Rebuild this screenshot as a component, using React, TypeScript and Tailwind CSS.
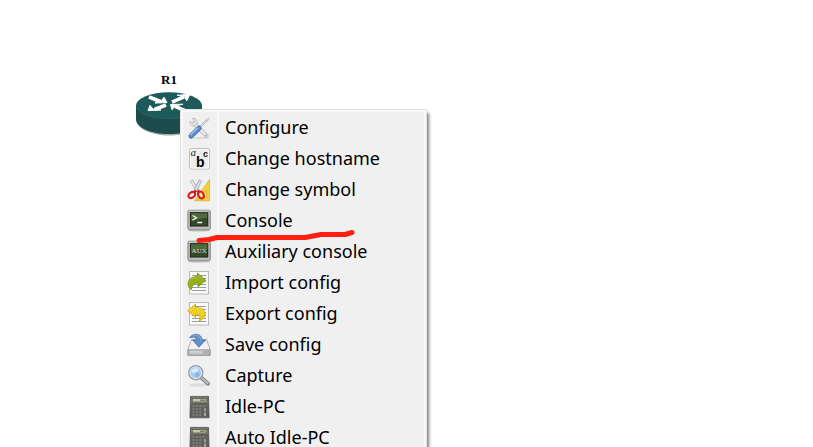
import type { ReactNode } from "react";

function Svg({ children }: { children: ReactNode }) {
    return (
        <svg viewBox="0 0 24 24" className="w-6 h-6 shrink-0" aria-hidden="true">
            {children}
        </svg>
    );
}

function ToolsIcon() {
    return (
        <Svg>
            <ellipse cx="12" cy="22" rx="10" ry="1.2" fill="#dcdcdc" />
            <path d="M7 7.5 19.5 20" stroke="#b4b7b9" strokeWidth="4.2" strokeLinecap="round" />
            <path d="M7 7.5 19.5 20" stroke="#e6e8e9" strokeWidth="2.8" strokeLinecap="round" />
            <path d="M3 5.5 5.8 7 7.5 5 5.5 2.4C8.5 1.8 10.6 4 10 7.5L8 10C5 10.5 2.6 8.5 3 5.5Z" fill="#e2e4e5" stroke="#b0b3b5" strokeWidth=".8" />
            <circle cx="19" cy="19.5" r=".9" fill="#9da1a4" />
            <path d="M12 12 19.5 4.5" stroke="#acb0b3" strokeWidth="2" />
            <path d="M12.3 11.7 19.5 4.5" stroke="#eceeef" strokeWidth="1" />
            <path d="m18.5 4 3-2 .8.8-2 3Z" fill="#d8dbdd" stroke="#a9adaf" strokeWidth=".5" />
            <path d="M4 20 12 12.2" stroke="#3f6fb2" strokeWidth="5" strokeLinecap="round" />
            <path d="M4 19.8 11.7 12.3" stroke="#5b8dcd" strokeWidth="3.4" strokeLinecap="round" />
            <path d="M3.6 18.8 10.5 12.2" stroke="#a9c8ee" strokeWidth="1.2" strokeLinecap="round" />
        </Svg>
    );
}

function HostnameIcon() {
    return (
        <Svg>
            <rect x="2.5" y="1.5" width="20" height="20.5" rx="2" fill="#ededed" stroke="#bdbdbd" />
            <rect x="3.5" y="2.5" width="18" height="18.5" rx="1" fill="none" stroke="#fafafa" />
            <text x="3.4" y="9" fontSize="11" fontStyle="italic" fontFamily="Liberation Serif, serif" fill="#222">a</text>
            <text x="9" y="19.6" fontSize="14" fontWeight="700" fontFamily="Liberation Sans, sans-serif" fill="#000">b</text>
            <text x="16" y="9.6" fontSize="9" fontWeight="700" fontFamily="Liberation Sans, sans-serif" fill="#111">c</text>
        </Svg>
    );
}

function SymbolIcon() {
    return (
        <Svg>
            <path d="M22.5 1.5V22.8H7.5Z" fill="#f4cf3c" stroke="#e0b02a" strokeWidth=".8" />
            <path d="M19.5 12.5v7h-5Z" fill="#f6e8b1" stroke="#d7a321" strokeWidth=".7" />
            <path d="M4.2 2.4 12.6 15" stroke="#a0a3a5" strokeWidth="3.4" />
            <path d="M4.4 2.8 12.4 14.8" stroke="#e3e5e6" strokeWidth="2.2" />
            <path d="M13.6 2 7 15" stroke="#989b9e" strokeWidth="3.4" />
            <path d="M13.6 2.3 7.2 14.8" stroke="#d9dcdd" strokeWidth="2.2" />
            <path d="M10.5 12.5 13 15M9 12.5 6.5 15.3" stroke="#d01818" strokeWidth="2.4" />
            <ellipse cx="4.8" cy="17" rx="3.6" ry="2.6" transform="rotate(-35 4.8 17)" fill="#f0f0f0" stroke="#d61d1d" strokeWidth="2" />
            <ellipse cx="14" cy="17" rx="2.6" ry="3.6" transform="rotate(-28 14 17)" fill="#f6e3a5" stroke="#d61d1d" strokeWidth="2" />
        </Svg>
    );
}

function Monitor({ children }: { children: ReactNode }) {
    return (
        <Svg>
            <ellipse cx="12" cy="21.4" rx="11" ry="1.2" fill="#bcbcbc" />
            <rect x=".8" y="1.2" width="22.6" height="19.5" rx="1.8" fill="#b0b2ac" stroke="#8b8d88" strokeWidth=".9" />
            <path d="M2 2.2h20" stroke="#d2d3cf" strokeWidth=".9" />
            <path d="M2 19h20" stroke="#c3c4c0" strokeWidth="1.2" />
            <rect x="3.5" y="3.7" width="17.2" height="13.3" fill="#34482a" stroke="#1c2617" strokeWidth="1" />
            <path d="M4 4.2h16.2V9C14 9 9 11 4 12Z" fill="#4f6a3d" />
            {children}
        </Svg>
    );
}

function ConsoleIcon() {
    return (
        <Monitor>
            <path d="m5.5 6.5 4 2.3-4 2.3M10.3 13.5h5" fill="none" stroke="#f2f5ee" strokeWidth="1.3" />
        </Monitor>
    );
}

function AuxIcon() {
    return (
        <Monitor>
            <text x="4.6" y="13" fontSize="7" fontFamily="Liberation Serif, serif" fill="#dde5d3">AUX</text>
        </Monitor>
    );
}

function Page() {
    return (
        <>
            <rect x="2.5" y=".5" width="19" height="22.5" fill="#fafafa" stroke="#b9b9b9" />
            <path d="M5 4.5h14M5 7.5h14M5 10.5h14M5 13.5h14M5 16.5h14M5 19.5h14" stroke="#9c9c9c" strokeWidth="1" />
        </>
    );
}

function ImportIcon() {
    return (
        <Svg>
            <Page />
            <path d="M10.5 2 18.7 9.2 11 15.8V12C7 12 5 14.2 4.2 18.8 1 16 .2 12.3 2.3 9 4.1 6.4 7 5.6 10.5 5.6Z" fill="#94b11a" stroke="#718913" strokeWidth=".8" />
            <path d="M11.3 4 16 8.2M2.5 11C4 7.5 7 6.6 11 6.6" fill="none" stroke="#b3ca40" strokeWidth=".8" />
        </Svg>
    );
}

function ExportIcon() {
    return (
        <Svg>
            <Page />
            <path d="M8.5 2 .7 8.8 8.5 15.5V12C12.3 12 14 14.5 12.3 19 17 16.8 19.2 13 17.4 9.4 15.9 6.4 12.8 5.6 8.5 5.6Z" fill="#ecd01c" stroke="#c9a10b" strokeWidth=".8" />
            <path d="M7.8 4 2.4 8.6M8.8 6.6C12.8 6.6 15.5 7.8 16.6 10.5" fill="none" stroke="#f7e76d" strokeWidth=".8" />
        </Svg>
    );
}

function SaveIcon() {
    return (
        <Svg>
            <path d="M4.5 6.5h15l3.7 10v5.8H.8v-5.8Z" fill="#f1f2f1" stroke="#a5a7a5" strokeWidth=".9" />
            <path d="M1 16.8h22v5.4H1Z" fill="#bfc0bf" stroke="#8b8d8b" strokeWidth=".8" />
            <path d="M2.5 18.3h13M2.5 20h13" stroke="#d6d7d6" strokeWidth=".8" />
            <path d="M17 18v3M19 18v3M21 18v3" stroke="#979997" strokeWidth=".8" />
            <path d="M2.6 4.8C5 .2 14.5-.8 15 7h3.6L11.9 14.2 5.5 7h4C9.4 4.2 6.5 3.4 2.6 4.8Z" fill="#6290c8" stroke="#4475ae" strokeWidth=".8" />
            <path d="M6 3C9.5 .8 13.4 2.6 13.9 8" fill="none" stroke="#94b7de" strokeWidth=".8" />
        </Svg>
    );
}

function CaptureIcon() {
    return (
        <Svg>
            <ellipse cx="11" cy="21" rx="9" ry="1.7" fill="#dcdcdc" />
            <path d="m14 13.5 7 6.2" stroke="#777a7d" strokeWidth="3.8" strokeLinecap="round" />
            <path d="m14 13.3 6.8 6" stroke="#c6c9cb" strokeWidth="1.8" strokeLinecap="round" />
            <circle cx="8.8" cy="8.7" r="7" fill="#a7c8ee" stroke="#9da1a4" strokeWidth="1.5" />
            <circle cx="8.8" cy="8.7" r="5.8" fill="none" stroke="#e5edf6" strokeWidth="1" />
            <path d="M4 8.5C4.5 4.5 9 3 12 5.3 11 8 7.5 9.5 4 8.5Z" fill="#dceafa" />
            <circle cx="10.2" cy="11" r="2.4" fill="#8cb6e8" />
        </Svg>
    );
}

function CalculatorIcon() {
    return (
        <Svg>
            <path d="M3.5 1.4h18l.6 21.4H2.9Z" fill="#5f605e" stroke="#50514f" strokeWidth=".8" />
            <rect x="4.4" y="2.4" width="16.2" height="5.6" fill="#8e9087" />
            <rect x="5.2" y="3.4" width="14.6" height="3.6" fill="#c5c8a5" stroke="#4a4c40" strokeWidth=".7" />
            <path d="M13 5.2h5.5" stroke="#6c6f50" strokeWidth="1.2" />
            <path d="M5.5 11h14M5.5 14h9M5.5 17h9M5.5 20h9" stroke="#858782" strokeWidth="1.5" strokeDasharray="2 1.4" />
            <path d="M18 13.2v3M18 17.5v3.5" stroke="#a2a49e" strokeWidth="2" />
        </Svg>
    );
}

function RouterIcon() {
    return (
        <svg viewBox="0 0 66 44" className="w-[66px] h-11 block" aria-hidden="true">
            <path d="M1 15v15c2 8 16 13.5 32 13.5S64 38 65 30V15Z" fill="#a5adad" />
            <path d="M0 13v15c1 8 15 14 33 14s32-6 33-14V13Z" fill="#1c4c4c" />
            <ellipse cx="33" cy="13.5" rx="33" ry="13.2" fill="#1d5a59" />
            <path d="M.5 15C3 22 16 26.8 33 26.8S63 22 65.5 15" fill="none" stroke="#2c6565" strokeWidth=".8" />
            <path d="m13 5 12 4.7M36 10.2l12-5.3M30 13 18.5 17.5M39 14.4l13 5.4" stroke="#fff" strokeWidth="3.6" />
            <path d="m28 5.2 3 5.4-12 .4 6-1.8ZM41 3.2l12.8-.8-3 6.4-2.3-4ZM14 13.4l-2 5.2 13-.6-8-.9ZM47 12.2l-12.5.2 1.5 5.4 3-3.8Z" fill="#fff" stroke="#fff" strokeWidth="1" strokeLinejoin="round" />
        </svg>
    );
}

const MENU_ITEMS = [
    { label: "Configure", Icon: ToolsIcon },
    { label: "Change hostname", Icon: HostnameIcon },
    { label: "Change symbol", Icon: SymbolIcon },
    { label: "Console", Icon: ConsoleIcon, marked: true },
    { label: "Auxiliary console", Icon: AuxIcon },
    { label: "Import config", Icon: ImportIcon },
    { label: "Export config", Icon: ExportIcon },
    { label: "Save config", Icon: SaveIcon },
    { label: "Capture", Icon: CaptureIcon },
    { label: "Idle-PC", Icon: CalculatorIcon },
    { label: "Auto Idle-PC", Icon: CalculatorIcon },
];

function Underline() {
    return (
        <svg viewBox="0 0 160 16" className="absolute left-3 top-6 z-10 w-40 h-4 pointer-events-none" aria-hidden="true">
            <path d="M4 11.5 14 10.5 22 8.5H110L118 7 126 5.5H150L157 3.5" fill="none" stroke="#ff1f12" strokeWidth="5" strokeLinecap="round" strokeLinejoin="round" />
        </svg>
    );
}

export default function App() {
    return (
        <main className="relative h-screen overflow-hidden bg-white text-black">
            <div className="absolute left-[136px] top-[72px] flex flex-col items-center">
                <span className="h-5 font-['Liberation_Serif',serif] text-[13px] leading-4 font-bold">R1</span>
                <RouterIcon />
            </div>

            <div
                role="menu"
                className="absolute left-[180px] top-[109px] w-[247px] border border-[#e2e2e2] bg-[#f8f8f8] p-0.5 shadow-[2px_4px_3px_#808080]"
            >
                {MENU_ITEMS.map(({ label, Icon, marked }) => (
                    <div key={label} className="relative">
                        <button
                            type="button"
                            role="menuitem"
                            className="flex h-[31px] w-full items-center bg-[#f0f0f0] pl-1 text-left font-['Noto_Sans',sans-serif] text-[18px] leading-[27px] hover:bg-[#e5f1fb]"
                        >
                            <Icon />
                            <span className="ml-1.5 h-full w-0.5 bg-[#f8f8f8]" />
                            <span className="ml-1.5 whitespace-nowrap">{label}</span>
                        </button>
                        {marked && <Underline />}
                    </div>
                ))}
            </div>
        </main>
    );
}
